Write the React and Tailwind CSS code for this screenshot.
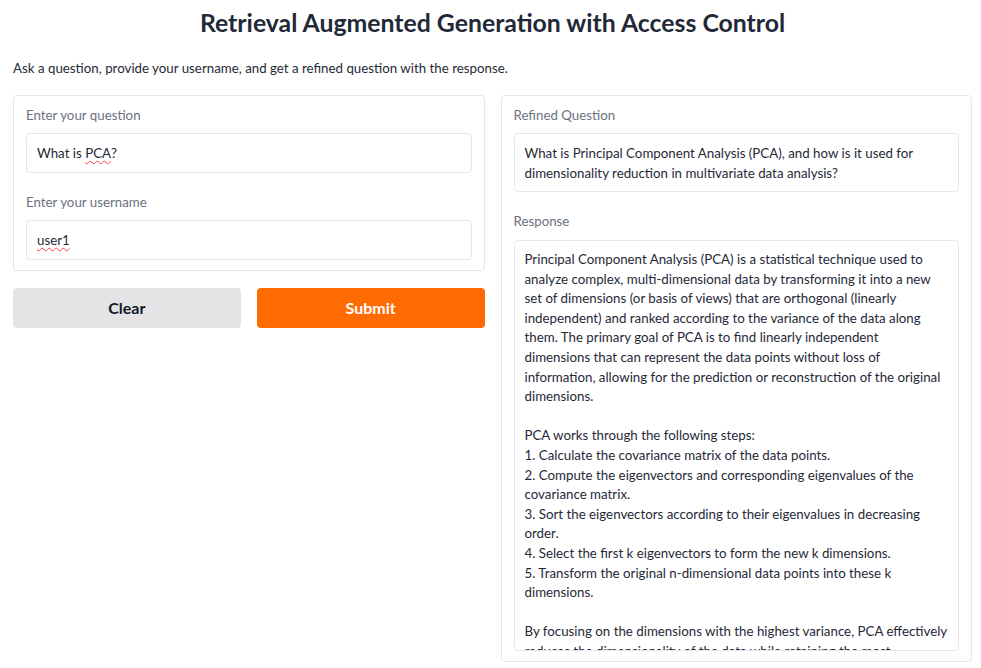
import React from 'react';

// line breaks follow the textarea wrapping in the original
const RESPONSE_LINES = [
  'Principal Component Analysis (PCA) is a statistical technique used to',
  'analyze complex, multi-dimensional data by transforming it into a new',
  'set of dimensions (or basis of views) that are orthogonal (linearly',
  'independent) and ranked according to the variance of the data along',
  'them. The primary goal of PCA is to find linearly independent',
  'dimensions that can represent the data points without loss of',
  'information, allowing for the prediction or reconstruction of the original',
  'dimensions.',
  '',
  'PCA works through the following steps:',
  '1. Calculate the covariance matrix of the data points.',
  '2. Compute the eigenvectors and corresponding eigenvalues of the',
  'covariance matrix.',
  '3. Sort the eigenvectors according to their eigenvalues in decreasing',
  'order.',
  '4. Select the first k eigenvectors to form the new k dimensions.',
  '5. Transform the original n-dimensional data points into these k',
  'dimensions.',
  '',
  'By focusing on the dimensions with the highest variance, PCA effectively',
  'reduces the dimensionality of the data while retaining the most',
  'important information.',
];

const Label = ({ children }) => (
  <div className="text-[13.3px] leading-5 text-[#6b7280]">{children}</div>
);

const Box = ({ children, className = '' }) => (
  <div className={`border border-[#e5e7eb] rounded-[4px] bg-white px-[10px] text-[13.3px] leading-5 text-[#1f2937] ${className}`}>
    {children}
  </div>
);

const Squiggle = ({ children }) => (
  <span className="underline decoration-wavy decoration-[#ef4444] decoration-1 underline-offset-2">{children}</span>
);

export default function App() {
  return (
    <div className="bg-white h-[668px] overflow-hidden pl-[13px] pr-[9px] text-[#1f2937]" style={{ fontFamily: 'Lato, "Noto Sans", sans-serif' }}>
      <h1 className="text-center text-[24.8px] font-bold leading-8 pt-[7px]">
        Retrieval Augmented Generation with Access Control
      </h1>
      <p className="text-[13.3px] leading-5 mt-[19px]">
        Ask a question, provide your username, and get a refined question with the response.
      </p>

      <div className="grid grid-cols-2 gap-4 mt-[17px] items-start">
        <div className="flex flex-col gap-[17px]">
          <div className="border border-[#e5e7eb] rounded-[4px] px-3 pt-[9px] pb-[10px] flex flex-col">
            <Label>Enter your question</Label>
            <Box className="mt-2 py-[9px]">
              What is <Squiggle>PCA</Squiggle>?
            </Box>
            <div className="mt-[19px]">
              <Label>Enter your username</Label>
            </div>
            <Box className="mt-2 py-[9px]">
              <Squiggle>user1</Squiggle>
            </Box>
          </div>
          <div className="grid grid-cols-2 gap-4">
            <button className="h-10 rounded-[4px] bg-[#e4e4e7] text-base font-bold text-[#111827]">Clear</button>
            <button className="h-10 rounded-[4px] bg-[#ff6b00] text-base font-bold text-white">Submit</button>
          </div>
        </div>

        <div className="border border-[#e5e7eb] rounded-[4px] px-3 pt-[9px] pb-[10px] flex flex-col h-[567px]">
          <Label>Refined Question</Label>
          <Box className="mt-2 pt-[9px] pb-[8px]">
            What is Principal Component Analysis (PCA), and how is it used for
            <br />
            dimensionality reduction in multivariate data analysis?
          </Box>
          <div className="mt-[19px]">
            <Label>Response</Label>
          </div>
          <Box className="mt-[9px] py-[9px] flex-1 min-h-0 overflow-hidden leading-[19.6px]">
            {RESPONSE_LINES.map((line, i) => (
              <div key={i} className="whitespace-nowrap h-[19.6px]">{line}</div>
            ))}
          </Box>
        </div>
      </div>
    </div>
  );
}
